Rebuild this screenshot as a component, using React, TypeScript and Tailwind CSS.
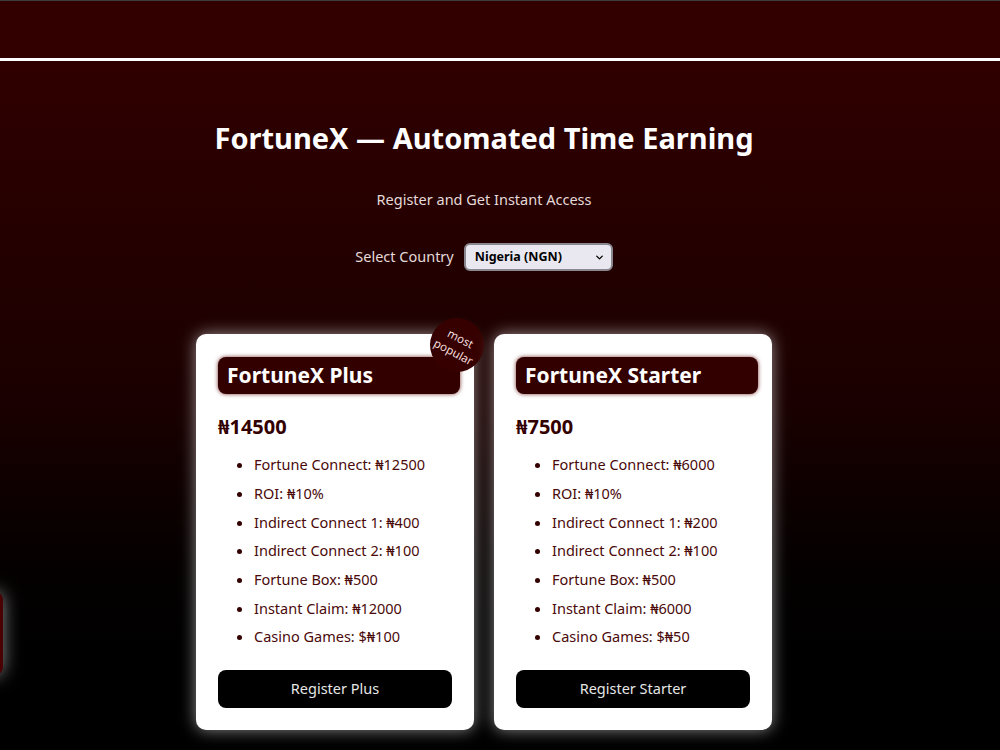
import React, { useState } from 'react';
import { ChevronDown } from 'lucide-react';

type Plan = {
    name: string;
    price: string;
    perks: string[];
    cta: string;
    popular?: boolean;
};

const plans: Plan[] = [
    {
        name: 'FortuneX Plus',
        price: '₦14500',
        popular: true,
        cta: 'Register Plus',
        perks: [
            'Fortune Connect: ₦12500',
            'ROI: ₦10%',
            'Indirect Connect 1: ₦400',
            'Indirect Connect 2: ₦100',
            'Fortune Box: ₦500',
            'Instant Claim: ₦12000',
            'Casino Games: $₦100',
        ],
    },
    {
        name: 'FortuneX Starter',
        price: '₦7500',
        cta: 'Register Starter',
        perks: [
            'Fortune Connect: ₦6000',
            'ROI: ₦10%',
            'Indirect Connect 1: ₦200',
            'Indirect Connect 2: ₦100',
            'Fortune Box: ₦500',
            'Instant Claim: ₦6000',
            'Casino Games: $₦50',
        ],
    },
];

function PlanCard({ plan }: { plan: Plan }) {
    return (
        <div className="relative w-[278px] bg-white rounded-[10px] px-[22px] pt-[23px] pb-[22px] shadow-[0_0_16px_rgba(255,255,255,0.55)]">
            {plan.popular && (
                <div className="absolute -top-[16px] -right-[10px] w-[54px] h-[54px] rounded-full bg-[#360000] flex items-center justify-center">
                    <span className="rotate-[28deg] text-[11.5px] leading-[15px] text-[#f1dede] text-center">
                        most<br />popular
                    </span>
                </div>
            )}

            {/* Plan name bar */}
            <h2 className="w-[242px] h-[37px] bg-[#330000] rounded-[8px] px-[9px] flex items-center text-white text-[21px] font-bold shadow-[0_0_4px_rgba(90,0,0,0.8)]">
                {plan.name}
            </h2>

            <div className="mt-[20px] text-[20px] font-bold text-[#330000] leading-[26px]">{plan.price}</div>

            <ul className="list-disc pl-[36px] mt-[10px] text-[14.5px] text-[#4a0a0a] marker:text-[#330000]">
                {plan.perks.map((perk) => (
                    <li key={perk} className="h-[28.7px] leading-[28.7px]">
                        {perk}
                    </li>
                ))}
            </ul>

            <button className="mt-[19px] w-full h-[38px] bg-black rounded-[8px] text-[#e6e6e6] text-[14.5px]">
                {plan.cta}
            </button>
        </div>
    );
}

export default function App() {
    const [country, setCountry] = useState('NGN');

    return (
        <div className="min-h-[750px] bg-black overflow-hidden" style={{ fontFamily: '"Noto Sans", "Open Sans", sans-serif' }}>
            {/* Top bar */}
            <header className="h-[61px] bg-[#330000] border-t border-[#3d3d3d] border-b-[3px] border-b-white" />

            <main className="min-h-[689px] bg-gradient-to-b from-[#300000] via-[#1a0000] to-black pr-[32px] flex flex-col items-center">
                <h1 className="mt-[57px] text-[29px] font-bold text-white leading-[40px]">
                    FortuneX — Automated Time Earning
                </h1>
                <p className="mt-[31px] text-[14.5px] text-[#e4dada]">Register and Get Instant Access</p>

                <div className="mt-[32px] flex items-center gap-[10px]">
                    <label className="text-[14.5px] text-[#e4dada]">Select Country</label>
                    <div className="relative">
                        <select
                            value={country}
                            onChange={(e) => setCountry(e.target.value)}
                            className="appearance-none w-[149px] h-[28px] rounded-[6px] bg-[#e9e8f0] border-2 border-[#8a8790] pl-[9px] text-[12.5px] font-bold text-black outline-none"
                        >
                            <option value="NGN">Nigeria (NGN)</option>
                            <option value="GHS">Ghana (GHS)</option>
                            <option value="KES">Kenya (KES)</option>
                        </select>
                        <ChevronDown className="absolute right-[8px] top-[9px] w-[11px] h-[11px] text-black pointer-events-none" strokeWidth={3} />
                    </div>
                </div>

                <div className="mt-[63px] flex gap-[20px]">
                    {plans.map((p) => (
                        <PlanCard key={p.name} plan={p} />
                    ))}
                </div>
            </main>

            {/* Side widget tucked off the left edge */}
            <div className="fixed left-[-60px] top-[592px] w-[63px] h-[83px] rounded-[8px] bg-[#4a0000] shadow-[0_0_18px_rgba(255,255,255,0.55)]" />
        </div>
    );
}
